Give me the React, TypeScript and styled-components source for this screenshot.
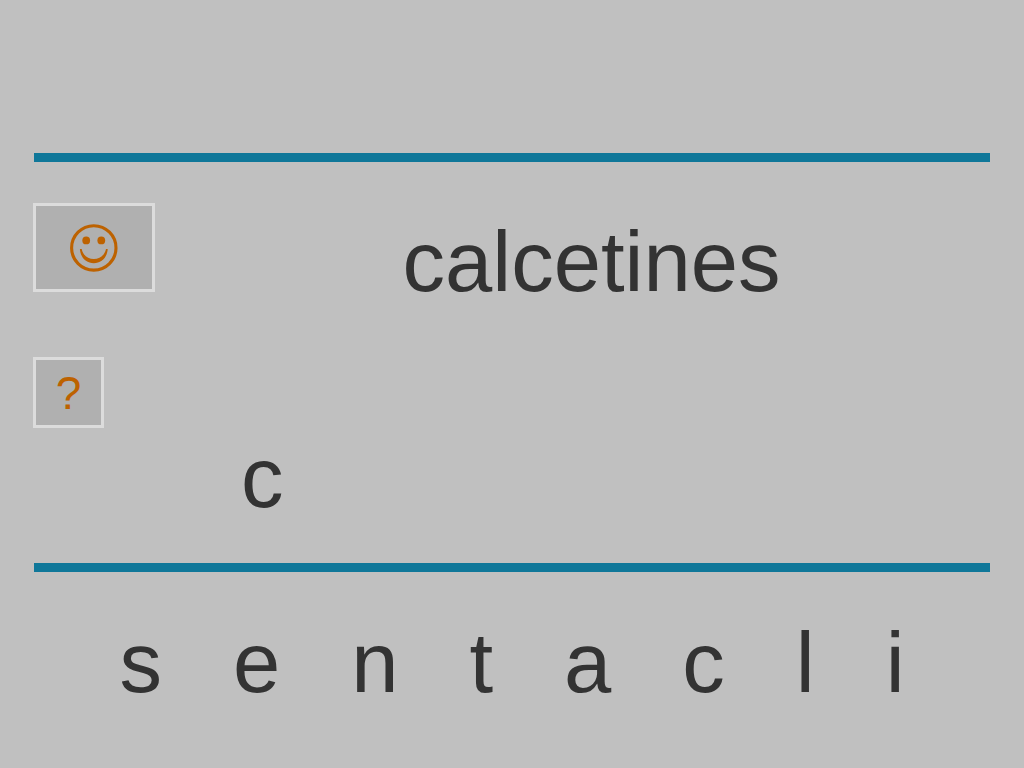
import React from "react";
import styled, { createGlobalStyle } from "styled-components";

const GlobalStyle = createGlobalStyle`
  *, *::before, *::after { box-sizing: border-box; }
  body {
    margin: 0;
    background: #c0c0c0;
    color: #333333;
    font-family: "Liberation Sans", Arial, Helvetica, sans-serif;
  }
`;

const Page = styled.main`
  display: flex;
  flex-direction: column;
  min-height: 100vh;
  padding: 153px 33px 0;
`;

const Rule = styled.hr`
  width: auto;
  height: 9px;
  margin: 0 1px;
  border: 0;
  background: #0f7799;
`;

const Board = styled.section`
  display: flex;
  flex-direction: column;
  padding: 41px 0 36px;
`;

const ModelRow = styled.div`
  display: flex;
  align-items: flex-start;
  height: 154px;
`;

const PanelButton = styled.button<{ $width: number; $height: number }>`
  display: flex;
  flex: none;
  align-items: center;
  justify-content: center;
  width: ${(p) => p.$width}px;
  height: ${(p) => p.$height}px;
  padding: 0;
  border: 3px solid #dcdcdc;
  background: #b0b0b0;
  color: #bd6200;
  font-family: inherit;
  font-size: 46px;
  line-height: 1;
  cursor: pointer;
`;

const Word = styled.h1`
  flex: 1;
  margin: 0 -33px 0 0;
  padding-left: 4px;
  font-size: 85px;
  font-weight: 400;
  line-height: 117px;
  text-align: center;
`;

const Answer = styled.p`
  margin: 0;
  padding-left: 208px;
  font-size: 85px;
  line-height: 99px;
`;

const Letters = styled.section`
  display: flex;
  justify-content: center;
  gap: 71px;
  padding-top: 41px;
`;

const Letter = styled.button`
  padding: 0;
  border: 0;
  background: none;
  color: inherit;
  font-family: inherit;
  font-size: 85px;
  line-height: 99px;
  cursor: pointer;
`;

const LETTERS = ["s", "e", "n", "t", "a", "c", "l", "i"];

function Smiley() {
  return (
    <svg width="48" height="48" viewBox="0 0 48 48" aria-hidden="true">
      <circle cx="23.8" cy="23.9" r="22.2" fill="none" stroke="currentColor" strokeWidth="3.1" />
      <circle cx="16.2" cy="16.4" r="3.9" fill="currentColor" />
      <circle cx="31.3" cy="16.4" r="3.9" fill="currentColor" />
      <path
        d="M9.9 25 C10.5 34 16.5 39.2 23.8 39.2 S37.1 34 37.7 25 L36 25 C34.5 31.6 29.5 35 23.8 35 S13.1 31.6 11.7 25 Z"
        fill="currentColor"
      />
    </svg>
  );
}

export default function App() {
  return (
    <>
      <GlobalStyle />
      <Page lang="es">
        <Rule />
        <Board>
          <ModelRow>
            <PanelButton type="button" $width={122} $height={89} aria-label="Comprobar">
              <Smiley />
            </PanelButton>
            <Word>calcetines</Word>
          </ModelRow>
          <PanelButton type="button" $width={71} $height={71}>
            ?
          </PanelButton>
          <Answer>c</Answer>
        </Board>
        <Rule />
        <Letters>
          {LETTERS.map((letter) => (
            <Letter key={letter} type="button">
              {letter}
            </Letter>
          ))}
        </Letters>
      </Page>
    </>
  );
}
